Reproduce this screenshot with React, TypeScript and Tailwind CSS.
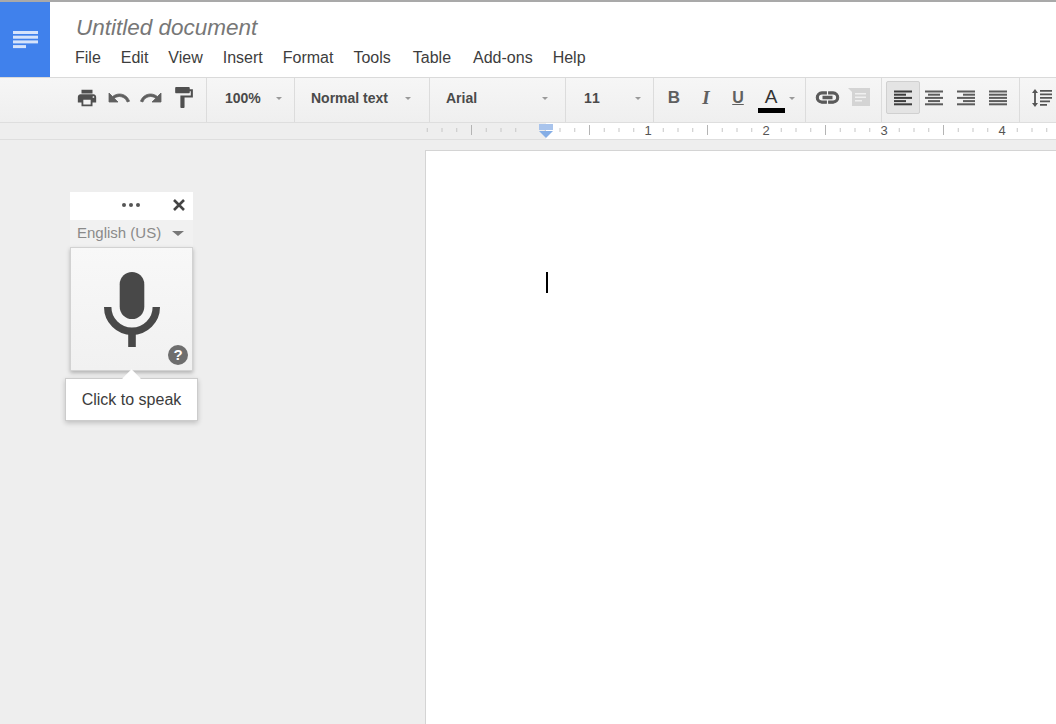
import React from 'react';

const menus = [
  { label: 'File', cls: 'ml-[25px]' },
  { label: 'Edit', cls: 'ml-[20px]' },
  { label: 'View', cls: 'ml-[20px]' },
  { label: 'Insert', cls: 'ml-[20px]' },
  { label: 'Format', cls: 'ml-[20px]' },
  { label: 'Tools', cls: 'ml-[20px]' },
  { label: 'Table', cls: 'ml-[22px]' },
  { label: 'Add-ons', cls: 'ml-[22px]' },
  { label: 'Help', cls: 'ml-[20px]' },
];

function Icon({ d, size = 24, fill = '#585858', sw = 0 }: { d: string; size?: number; fill?: string; sw?: number }) {
  return (
    <svg width={size} height={size} viewBox="0 0 24 24" fill={fill} stroke={sw ? fill : 'none'} strokeWidth={sw}>
      <path d={d} />
    </svg>
  );
}

function Caret() {
  return <span className="block w-0 h-0 border-x-[3.5px] border-x-transparent border-t-[3px] border-t-[#9a9a9a]" />;
}

function Sep() {
  return <div className="w-px h-full bg-[#dcdcdc] shrink-0" />;
}

function IconBtn({ children }: { children: React.ReactNode }) {
  return <div className="w-[32px] h-[32px] flex items-center justify-center shrink-0">{children}</div>;
}

function Lines({ rows, fill = '#5c5c5c' }: { rows: [number, number][]; fill?: string }) {
  return (
    <svg width="18" height="16" viewBox="0 0 18 16" fill={fill}>
      {rows.map(([x, w], i) => (
        <rect key={i} x={x} y={0.5 + i * 3.2} width={w} height="2" />
      ))}
    </svg>
  );
}

function Select({ text, cls, caretCls, textCls = '' }: { text: string; cls: string; caretCls: string; textCls?: string }) {
  return (
    <div className={'h-full flex items-center pb-[3px] shrink-0 ' + cls}>
      <span className={'text-[14px] font-bold text-[#4a4a4a] ' + textCls}>{text}</span>
      <span className={caretCls}>
        <Caret />
      </span>
    </div>
  );
}

function Ruler() {
  const ticks = [];
  for (let i = 0; i < 43; i++) {
    if (i % 8 === 7) continue;
    const x = 0.75 + i * 14.75;
    const big = i % 8 === 3;
    ticks.push(<rect key={i} x={x} y={big ? 2 : 5} width="1" height={big ? 10 : 4} fill={big ? '#b4b4b4' : '#c6c6c6'} />);
  }
  return (
    <div className="h-[18px] flex border-y border-[#dedede] bg-[#eeeeee] shrink-0">
      <div className="w-[426px] shrink-0" />
      <div className="relative flex-1 bg-[linear-gradient(to_right,#eeeeee_120px,#ffffff_120px)] overflow-hidden">
        <svg width="630" height="16" className="absolute left-0 top-0">{ticks}</svg>
        {[1, 2, 3, 4].map((n) => (
          <span
            key={n}
            className="absolute top-0 w-[20px] text-center text-[13px] leading-[15px] text-[#555555]"
            style={{ left: 212 + (n - 1) * 118 }}
          >
            {n}
          </span>
        ))}
        <svg width="14" height="15" viewBox="0 0 14 15" className="absolute left-[113px] top-[1px]">
          <rect x="0" y="0" width="14" height="6" fill="#a9c4ec" />
          <path d="M0 7h14l-7 7z" fill="#85aee6" />
        </svg>
      </div>
    </div>
  );
}

function VoicePanel() {
  return (
    <div className="w-[123px] ml-[70px] mt-[52px] relative">
      <div className="h-[28px] pb-[2px] bg-white flex items-center">
        <div className="flex gap-[3px] ml-[52px]">
          <span className="w-[4px] h-[4px] rounded-full bg-[#555555]" />
          <span className="w-[4px] h-[4px] rounded-full bg-[#555555]" />
          <span className="w-[4px] h-[4px] rounded-full bg-[#555555]" />
        </div>
        <svg width="14" height="14" viewBox="0 0 14 14" className="ml-auto mr-[7px]">
          <path d="M2 2l10 10M12 2L2 12" stroke="#444444" strokeWidth="2.6" />
        </svg>
      </div>
      <div className="h-[27px] bg-[#f1f1f1] flex items-center pl-[7px]">
        <span className="text-[15px] text-[#8a8a8a]">English (US)</span>
        <span className="ml-[11px] block w-0 h-0 border-x-[6px] border-x-transparent border-t-[5px] border-t-[#777777]" />
      </div>
      <div className="relative h-[124px] bg-[linear-gradient(to_bottom,#f8f8f8,#f1f1f1)] border border-[#d2d2d2] shadow-[0_2px_4px_rgba(0,0,0,0.25)] flex items-start justify-center">
        <svg width="56" height="76" viewBox="0 0 56 76" className="mt-[24px]">
          <rect x="15.7" y="0" width="24.6" height="47" rx="12.3" fill="#484848" />
          <path d="M3.7 35a24.3 24.3 0 0 0 48.6 0" fill="none" stroke="#484848" strokeWidth="7.4" />
          <rect x="24.2" y="58" width="7.6" height="17" fill="#484848" />
        </svg>
        <span className="absolute right-[4px] bottom-[5px] w-[20px] h-[20px] rounded-full bg-[#6e6e6e] text-white text-[15px] font-bold leading-[20px] text-center">?</span>
      </div>
      <div className="relative w-[133px] h-[43px] -ml-[5px] mt-[7px] bg-white border border-[#cccccc] shadow-[0_2px_5px_rgba(0,0,0,0.2)] flex items-center justify-center text-[16px] text-[#3c3c3c]">
        <span className="absolute left-[59px] -top-[7px] w-[13px] h-[13px] rotate-45 bg-white" />
        <span className="relative">Click to speak</span>
      </div>
    </div>
  );
}

export default function App() {
  return (
    <div className="w-[1056px] h-[724px] overflow-hidden flex flex-col bg-[#eeeeee] font-['Liberation_Sans',Arial,sans-serif]">
      <div className="h-[78px] flex bg-white border-t-2 border-[#a9a9a9] border-b border-b-[#dadada] shrink-0">
        <div className="w-[50px] h-full bg-[#4081ec] flex items-center justify-center pl-[1px] shrink-0">
          <svg width="25" height="18" viewBox="0 0 25 18" fill="#d5e3fb">
            <rect x="0" y="0" width="25" height="3" />
            <rect x="0" y="4.7" width="25" height="3" />
            <rect x="0" y="9.4" width="25" height="3" />
            <rect x="0" y="14.1" width="13" height="3" />
          </svg>
        </div>
        <div className="flex flex-col">
          <div className="pl-[26px] pt-[12px] text-[22.5px] leading-[27px] italic text-[#777777]">Untitled document</div>
          <div className="flex mt-[7px] text-[16px] leading-[20px] text-[#3d3d3d]">
            {menus.map((m) => (
              <span key={m.label} className={m.cls}>
                {m.label}
              </span>
            ))}
          </div>
        </div>
      </div>

      <div className="h-[44px] flex items-center bg-[linear-gradient(to_bottom,#f6f6f6,#efefef)] shrink-0 overflow-hidden">
        <div className="h-full flex items-center pb-[5px] pl-[71px] w-[206px] shrink-0">
          <IconBtn>
            <Icon size={22} fill="#505050" d="M19 8H5c-1.66 0-3 1.34-3 3v6h4v4h12v-4h4v-6c0-1.66-1.34-3-3-3zm-3 11H8v-5h8v5zm3-7c-.55 0-1-.45-1-1s.45-1 1-1 1 .45 1 1-.45 1-1 1zm-1-9H6v4h12V3z" />
          </IconBtn>
          <IconBtn>
            <Icon size={24} fill="#606060" sw={0.8} d="M12.5 8c-2.65 0-5.05.99-6.9 2.6L2 7v9h9l-3.62-3.62c1.39-1.16 3.16-1.88 5.12-1.88 3.54 0 6.55 2.31 7.6 5.5l2.37-.78C21.08 11.03 17.15 8 12.5 8z" />
          </IconBtn>
          <IconBtn>
            <Icon size={24} fill="#606060" sw={0.8} d="M18.4 10.6C16.55 8.99 14.15 8 11.5 8c-4.65 0-8.58 3.03-9.96 7.22L3.9 16c1.05-3.19 4.05-5.5 7.6-5.5 1.95 0 3.73.72 5.12 1.88L13 16h9V7l-3.6 3.6z" />
          </IconBtn>
          <IconBtn>
            <Icon size={25} fill="#505050" d="M18 4V3c0-.55-.45-1-1-1H5c-.55 0-1 .45-1 1v4c0 .55.45 1 1 1h12c.55 0 1-.45 1-1V6h1v4H9v11c0 .55.45 1 1 1h2c.55 0 1-.45 1-1v-9h8V4h-3z" />
          </IconBtn>
        </div>
        <Sep />
        <Select text="100%" cls="w-[87px] pl-[18px]" caretCls="ml-[15px]" />
        <Sep />
        <Select text="Normal text" cls="w-[134px] pl-[16px]" caretCls="ml-[17px]" />
        <Sep />
        <Select text="Arial" cls="w-[135px] pl-[16px]" caretCls="ml-[65px]" />
        <Sep />
        <Select text="11" cls="w-[87px] pl-[18px]" textCls="tracking-[1px]" caretCls="ml-[34px]" />
        <Sep />
        <div className="h-full w-[151px] flex items-center pb-[4px] pl-[4px] shrink-0">
          <IconBtn><span className="text-[17px] font-bold text-[#606060]">B</span></IconBtn>
          <IconBtn><span className="font-['Liberation_Serif',serif] text-[19px] font-bold italic text-[#606060]">I</span></IconBtn>
          <IconBtn><span className="text-[16px] font-bold underline text-[#606060]">U</span></IconBtn>
          <div className="w-[32px] h-[36px] flex flex-col items-center shrink-0 ml-[1px]">
            <span className="text-[19px] leading-[24px] mt-[5px] text-[#333333]">A</span>
            <span className="block w-[27px] h-[5px] bg-black -mt-[1px]" />
          </div>
          <span className="ml-[2px]"><Caret /></span>
        </div>
        <Sep />
        <div className="h-full w-[75px] flex items-center pb-[5px] pl-[5px] shrink-0">
          <IconBtn>
            <Icon size={27} fill="#5a5a5a" sw={0.9} d="M3.9 12c0-1.71 1.39-3.1 3.1-3.1h4V7H7c-2.76 0-5 2.24-5 5s2.24 5 5 5h4v-1.9H7c-1.71 0-3.1-1.39-3.1-3.1zM8 13h8v-2H8v2zm9-6h-4v1.9h4c1.71 0 3.1 1.39 3.1 3.1s-1.39 3.1-3.1 3.1h-4V17h4c2.76 0 5-2.24 5-5s-2.24-5-5-5z" />
          </IconBtn>
          <IconBtn>
            <svg width="23" height="19" viewBox="0 0 23 19">
              <path d="M0 0h22v18H4V4z" fill="#d4d4d4" />
              <path d="M7 5h11v1.5H7zM7 8.5h11V10H7zM7 12h7v1.5H7z" fill="#f0f0f0" />
            </svg>
          </IconBtn>
        </div>
        <Sep />
        <div className="h-full w-[137px] flex items-center pb-[5px] pl-[4px] shrink-0">
          <div className="w-[34px] h-[33px] -mr-[2px] flex items-center justify-center shrink-0 bg-[#e4e4e4] border border-[#d0d0d0] rounded-[2px]">
            <Lines fill="#3c3c3c" rows={[[0, 18], [0, 12], [0, 18], [0, 12], [0, 18]]} />
          </div>
          <IconBtn><Lines rows={[[0, 18], [3, 12], [0, 18], [3, 12], [0, 18]]} /></IconBtn>
          <IconBtn><Lines rows={[[0, 18], [6, 12], [0, 18], [6, 12], [0, 18]]} /></IconBtn>
          <IconBtn><Lines rows={[[0, 18], [0, 18], [0, 18], [0, 18], [0, 18]]} /></IconBtn>
        </div>
        <Sep />
        <div className="h-full flex items-center pb-[5px] pl-[12px] shrink-0">
          <svg width="20" height="18" viewBox="0 0 20 18" fill="#555555">
            <path d="M3 0l3 4H3.9v10H6l-3 4-3-4h2.1V4H0z" />
            <path d="M8 1h12v1.7H8zM8 4.5h12v1.7H8zM8 8h12v1.7H8zM8 11.5h10v1.7H8zM8 15h7v1.7H8z" />
          </svg>
        </div>
      </div>

      <Ruler />

      <div className="flex-1 flex min-h-0">
        <div className="w-[425px] shrink-0">
          <VoicePanel />
        </div>
        <div className="flex-1 mt-[10px] bg-white border-t border-l border-[#d4d4d4] pl-[120px] pt-[121px]">
          <div className="w-[2px] h-[21px] bg-black" />
        </div>
      </div>
    </div>
  );
}
